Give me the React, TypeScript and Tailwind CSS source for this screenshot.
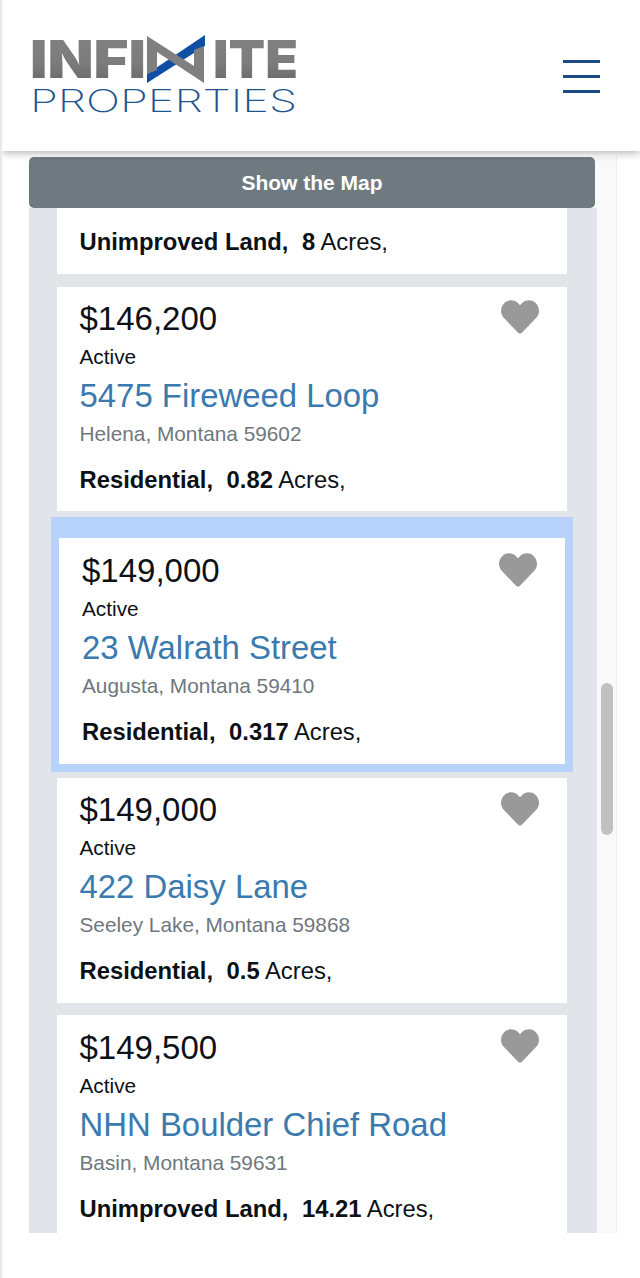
import { FaHeart } from "react-icons/fa";

type Listing = {
  price: string;
  address: string;
  city: string;
  kind: string;
  acres: string;
};

const first: Listing = {
  price: "$146,200",
  address: "5475 Fireweed Loop",
  city: "Helena, Montana 59602",
  kind: "Residential,",
  acres: "0.82",
};
const selected: Listing = {
  price: "$149,000",
  address: "23 Walrath Street",
  city: "Augusta, Montana 59410",
  kind: "Residential,",
  acres: "0.317",
};
const third: Listing = {
  price: "$149,000",
  address: "422 Daisy Lane",
  city: "Seeley Lake, Montana 59868",
  kind: "Residential,",
  acres: "0.5",
};
const fourth: Listing = {
  price: "$149,500",
  address: "NHN Boulder Chief Road",
  city: "Basin, Montana 59631",
  kind: "Unimproved Land,",
  acres: "14.21",
};

function Logo() {
  return (
    <svg width="270" height="100" viewBox="30 20 270 100" className="block">
      <defs>
        <linearGradient id="metal" x1="0" y1="0" x2="0" y2="1">
          <stop offset="0" stopColor="#828282" />
          <stop offset="0.55" stopColor="#7c7c7c" />
          <stop offset="1" stopColor="#626262" />
        </linearGradient>
      </defs>
      <text x="30" y="78" fontFamily="Inter" fontWeight="900" fontSize="52" fill="url(#metal)" textLength="116" lengthAdjust="spacingAndGlyphs">
        INFI
      </text>
      <text x="213" y="78" fontFamily="Inter" fontWeight="900" fontSize="52" fill="url(#metal)" textLength="85" lengthAdjust="spacingAndGlyphs">
        ITE
      </text>
      <polygon points="147,74 205,35 205,46 147,83" fill="#0f4fa3" />
      <polygon points="147,36 194,66 194,50 204,46 204,83 157,52 157,70 147,74" fill="#7f7f7f" />
      <text x="30" y="112" fontFamily="Inter" fontWeight="200" fontSize="31" fill="#1f5590" textLength="267" lengthAdjust="spacingAndGlyphs">
        PROPERTIES
      </text>
    </svg>
  );
}

function ListingBody({ item, heartTop }: { item: Listing; heartTop: string }) {
  return (
    <>
      <p className="text-[33px] leading-[40px] text-[#0c1116]">{item.price}</p>
      <p className="mt-[5px] text-[20.8px] leading-[26px] text-[#0c1116]">Active</p>
      <p className="mt-[6px] text-[32.9px] leading-[40px] text-[#3a7aae]">{item.address}</p>
      <p className="mt-[5px] text-[20.8px] leading-[26px] text-[#6f777e]">{item.city}</p>
      <p className="mt-[18px] text-[23.8px] leading-[30px] text-[#0c1116]">
        <b>{item.kind}</b>
        <b className="ml-[13.5px]">{item.acres}</b> Acres,
      </p>
      <FaHeart className={`absolute right-[28px] text-[#999999] ${heartTop}`} size={38} />
    </>
  );
}

function Card({ item, className, heartTop }: { item: Listing; className: string; heartTop: string }) {
  return (
    <div className={`relative ml-[28px] mr-[30px] bg-white pl-[22.5px] ${className}`}>
      <ListingBody item={item} heartTop={heartTop} />
    </div>
  );
}

export default function App() {
  return (
    <div className="relative h-[1278px] w-[640px] overflow-hidden border-l-2 border-[#e8e8e8] bg-white font-['Liberation_Sans',Arial,sans-serif]">
      <header className="relative z-10 flex h-[151px] items-start justify-between bg-white pl-[28px] pr-[40px] pt-[20px] shadow-[0_2px_8px_rgba(0,0,0,0.3)]">
        <Logo />
        <button type="button" className="mt-[40px] flex w-[37px] flex-col gap-[12px]">
          <span className="h-[3px] bg-[#1a4a86]" />
          <span className="h-[3px] bg-[#1a4a86]" />
          <span className="h-[3px] bg-[#1a4a86]" />
        </button>
      </header>

      <main className="relative ml-[27px] mt-[6px] h-[1076px] w-[588px] overflow-hidden border-r border-[#eeeeee] bg-[#f9f9f9]">
        <button
          type="button"
          className="block h-[51px] w-[566px] rounded-[5px] bg-[#6f7a80] text-center text-[21px] font-bold text-white"
        >
          Show the Map
        </button>
        <div className="h-[1025px] w-[568px] overflow-hidden bg-[#e1e4e8]">
          <div className="ml-[28px] mr-[30px] h-[66px] bg-white pl-[22.5px] pt-[19px]">
            <p className="text-[23.8px] leading-[30px] text-[#0c1116]">
              <b>Unimproved Land,</b>
              <b className="ml-[13.5px]">8</b> Acres,
            </p>
          </div>

          <Card item={first} className="mt-[13px] h-[224px] pt-[12px]" heartTop="top-[11px]" />

          <div className="relative ml-[22px] mr-[24px] mt-[6px] h-[255px] border-x-[8px] border-b-[8px] border-t-[21px] border-[#b8d3fb] bg-white pl-[23px] pt-[13px]">
            <ListingBody item={selected} heartTop="top-[13px]" />
          </div>

          <Card item={third} className="mt-[6px] h-[225px] pt-[12px]" heartTop="top-[12px]" />
          <Card item={fourth} className="mt-[12px] h-[240px] pt-[13px]" heartTop="top-[12px]" />
        </div>
        <div className="absolute left-[572px] top-[526px] h-[152px] w-[12px] rounded-full bg-[#c1c1c1]" />
      </main>
    </div>
  );
}
